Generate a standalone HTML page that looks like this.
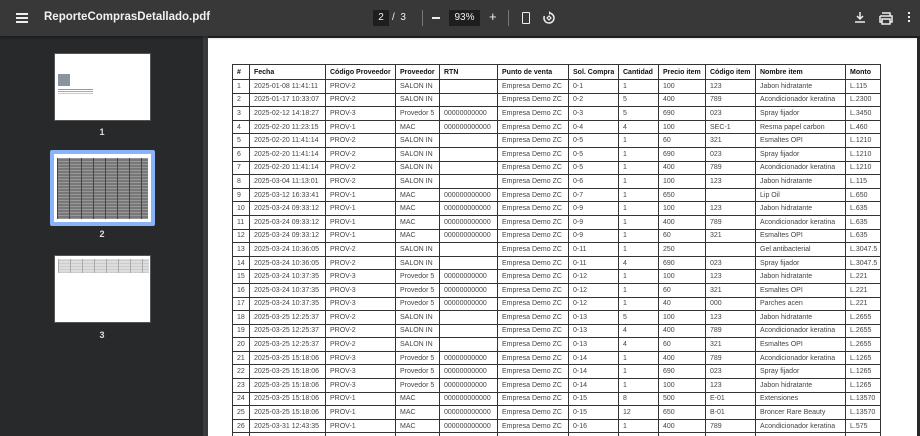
<!DOCTYPE html>
<html><head><meta charset="utf-8"><style>
*{margin:0;padding:0;box-sizing:border-box}
html,body{width:920px;height:436px;overflow:hidden}
body{background:#282828;font-family:"Liberation Sans",sans-serif;position:relative}
#tb{position:absolute;left:0;top:0;width:920px;height:36px;background:#383838;box-shadow:0 1px 3px rgba(0,0,0,.5);color:#f1f1f1;z-index:2}
#side{position:absolute;left:0;top:36px;width:203px;height:400px;background:#28292a}
#div{position:absolute;left:203px;top:36px;width:5px;height:400px;background:#3a3b3c}
#page{position:absolute;left:208px;top:38px;width:709px;height:398px;background:#fff;overflow:hidden}
.th{position:absolute;background:#fff;border:1px solid #555}
.num{position:absolute;color:#ddd;font-size:9px;font-weight:bold;width:20px;text-align:center}
table{position:absolute;left:24px;top:26px;border-collapse:collapse;table-layout:fixed;width:648px;font-size:7px;color:#444}
td,th{border:1px solid #333;height:13.6px;padding:0 0 0 4px;white-space:nowrap;overflow:hidden;text-align:left;line-height:11px}
th{color:#111;font-weight:bold;height:15px}
</style></head><body>
<div id="tb">
 <div style="position:absolute;left:16px;top:13px;width:12px;height:2px;background:#eee;box-shadow:0 4px 0 #eee,0 8px 0 #eee"></div>
 <div style="position:absolute;left:44px;top:11px;font-size:11.5px;font-weight:bold">ReporteComprasDetallado.pdf</div>
 <div style="position:absolute;left:373px;top:10px;width:16px;height:16px;background:#1e1e1e;font-size:10px;text-align:center;line-height:16px">2</div>
 <div style="position:absolute;left:392px;top:12px;font-size:10px">/&nbsp; 3</div>
 <div style="position:absolute;left:422px;top:10px;width:1px;height:16px;background:#777"></div>
 <div style="position:absolute;left:432px;top:17px;width:8px;height:1.5px;background:#eee"></div>
 <div style="position:absolute;left:449px;top:10px;width:31px;height:16px;background:#1e1e1e;font-size:10px;text-align:center;line-height:16px">93%</div>
 <div style="position:absolute;left:489px;top:9px;font-size:13px">+</div>
 <div style="position:absolute;left:508px;top:10px;width:1px;height:16px;background:#777"></div>
 <div style="position:absolute;left:522px;top:12px;width:8px;height:12px;border:1.5px solid #eee;border-radius:1px"></div>
 <svg style="position:absolute;left:541px;top:10px" width="16" height="16" viewBox="0 0 16 16"><path d="M8 3a5 5 0 1 1-4.6 3" fill="none" stroke="#eee" stroke-width="1.5"/><path d="M8 6l-2 2 2 2 2-2z" fill="none" stroke="#eee" stroke-width="1.2"/><path d="M8 1v4l2-2z" fill="#eee"/></svg>
 <svg style="position:absolute;left:853px;top:11px" width="14" height="14" viewBox="0 0 14 14"><path d="M7 1v7M4 5l3 3 3-3M2 11h10" fill="none" stroke="#eee" stroke-width="1.5"/></svg>
 <svg style="position:absolute;left:878px;top:10px" width="16" height="16" viewBox="0 0 16 16"><path d="M4 3h8v3M2 6h12v6h-2M4 12H2V6M4 9h8v5H4z" fill="none" stroke="#eee" stroke-width="1.5"/></svg>
 <div style="position:absolute;left:908px;top:12px;width:2px;height:2px;background:#eee;box-shadow:0 4px 0 #eee,0 8px 0 #eee"></div>
</div>
<div id="side">
 <div class="th" style="left:54px;top:17px;width:97px;height:68px"><div style="position:absolute;left:3px;top:20px;width:12px;height:12px;background:#8a94a3"></div><div style="position:absolute;left:3px;top:35px;width:35px;height:1px;background:#999;box-shadow:0 2px 0 #aaa,0 4px 0 #ccc"></div></div>
 <div class="num" style="left:92px;top:91px">1</div>
 <div style="position:absolute;left:50px;top:114px;width:105px;height:76px;background:#8ab4f8;border-radius:2px"></div>
 <div class="th" style="left:54px;top:118px;width:97px;height:68px;border:none"><div style="position:absolute;left:3px;top:4px;width:91px;height:61px;background:repeating-linear-gradient(90deg,#444 0 1px,transparent 1px 12px),repeating-linear-gradient(0deg,#999 0 1px,#777 1px 3px)"></div></div>
 <div class="num" style="left:92px;top:193px">2</div>
 <div class="th" style="left:54px;top:219px;width:97px;height:68px"><div style="position:absolute;left:3px;top:3px;width:91px;height:14px;background:repeating-linear-gradient(90deg,#aaa 0 1px,transparent 1px 12px),repeating-linear-gradient(0deg,#ccc 0 1px,#ddd 1px 3px)"></div></div>
 <div class="num" style="left:92px;top:294px">3</div>
</div>
<div id="div"></div>
<div id="page">
<table>
<colgroup><col style="width:17px"><col style="width:76px"><col style="width:70px"><col style="width:44px"><col style="width:58px"><col style="width:71px"><col style="width:50px"><col style="width:40px"><col style="width:47px"><col style="width:50px"><col style="width:90px"><col style="width:35px"></colgroup>
<tr><th>#</th><th>Fecha</th><th>Código Proveedor</th><th>Proveedor</th><th>RTN</th><th>Punto de venta</th><th>Sol. Compra</th><th>Cantidad</th><th>Precio item</th><th>Código item</th><th>Nombre item</th><th>Monto</th></tr>
<tr><td>1</td><td>2025-01-08 11:41:11</td><td>PROV-2</td><td>SALON IN</td><td></td><td>Empresa Demo ZC</td><td>0-1</td><td>1</td><td>100</td><td>123</td><td>Jabon hidratante</td><td>L.115</td></tr>
<tr><td>2</td><td>2025-01-17 10:33:07</td><td>PROV-2</td><td>SALON IN</td><td></td><td>Empresa Demo ZC</td><td>0-2</td><td>5</td><td>400</td><td>789</td><td>Acondicionador keratina</td><td>L.2300</td></tr>
<tr><td>3</td><td>2025-02-12 14:18:27</td><td>PROV-3</td><td>Provedor 5</td><td>00000000000</td><td>Empresa Demo ZC</td><td>0-3</td><td>5</td><td>690</td><td>023</td><td>Spray fijador</td><td>L.3450</td></tr>
<tr><td>4</td><td>2025-02-20 11:23:15</td><td>PROV-1</td><td>MAC</td><td>000000000000</td><td>Empresa Demo ZC</td><td>0-4</td><td>4</td><td>100</td><td>SEC-1</td><td>Resma papel carbon</td><td>L.460</td></tr>
<tr><td>5</td><td>2025-02-20 11:41:14</td><td>PROV-2</td><td>SALON IN</td><td></td><td>Empresa Demo ZC</td><td>0-5</td><td>1</td><td>60</td><td>321</td><td>Esmaltes OPI</td><td>L.1210</td></tr>
<tr><td>6</td><td>2025-02-20 11:41:14</td><td>PROV-2</td><td>SALON IN</td><td></td><td>Empresa Demo ZC</td><td>0-5</td><td>1</td><td>690</td><td>023</td><td>Spray fijador</td><td>L.1210</td></tr>
<tr><td>7</td><td>2025-02-20 11:41:14</td><td>PROV-2</td><td>SALON IN</td><td></td><td>Empresa Demo ZC</td><td>0-5</td><td>1</td><td>400</td><td>789</td><td>Acondicionador keratina</td><td>L.1210</td></tr>
<tr><td>8</td><td>2025-03-04 11:13:01</td><td>PROV-2</td><td>SALON IN</td><td></td><td>Empresa Demo ZC</td><td>0-6</td><td>1</td><td>100</td><td>123</td><td>Jabon hidratante</td><td>L.115</td></tr>
<tr><td>9</td><td>2025-03-12 16:33:41</td><td>PROV-1</td><td>MAC</td><td>000000000000</td><td>Empresa Demo ZC</td><td>0-7</td><td>1</td><td>650</td><td></td><td>Lip Oil</td><td>L.650</td></tr>
<tr><td>10</td><td>2025-03-24 09:33:12</td><td>PROV-1</td><td>MAC</td><td>000000000000</td><td>Empresa Demo ZC</td><td>0-9</td><td>1</td><td>100</td><td>123</td><td>Jabon hidratante</td><td>L.635</td></tr>
<tr><td>11</td><td>2025-03-24 09:33:12</td><td>PROV-1</td><td>MAC</td><td>000000000000</td><td>Empresa Demo ZC</td><td>0-9</td><td>1</td><td>400</td><td>789</td><td>Acondicionador keratina</td><td>L.635</td></tr>
<tr><td>12</td><td>2025-03-24 09:33:12</td><td>PROV-1</td><td>MAC</td><td>000000000000</td><td>Empresa Demo ZC</td><td>0-9</td><td>1</td><td>60</td><td>321</td><td>Esmaltes OPI</td><td>L.635</td></tr>
<tr><td>13</td><td>2025-03-24 10:36:05</td><td>PROV-2</td><td>SALON IN</td><td></td><td>Empresa Demo ZC</td><td>0-11</td><td>1</td><td>250</td><td></td><td>Gel antibacterial</td><td>L.3047.5</td></tr>
<tr><td>14</td><td>2025-03-24 10:36:05</td><td>PROV-2</td><td>SALON IN</td><td></td><td>Empresa Demo ZC</td><td>0-11</td><td>4</td><td>690</td><td>023</td><td>Spray fijador</td><td>L.3047.5</td></tr>
<tr><td>15</td><td>2025-03-24 10:37:35</td><td>PROV-3</td><td>Provedor 5</td><td>00000000000</td><td>Empresa Demo ZC</td><td>0-12</td><td>1</td><td>100</td><td>123</td><td>Jabon hidratante</td><td>L.221</td></tr>
<tr><td>16</td><td>2025-03-24 10:37:35</td><td>PROV-3</td><td>Provedor 5</td><td>00000000000</td><td>Empresa Demo ZC</td><td>0-12</td><td>1</td><td>60</td><td>321</td><td>Esmaltes OPI</td><td>L.221</td></tr>
<tr><td>17</td><td>2025-03-24 10:37:35</td><td>PROV-3</td><td>Provedor 5</td><td>00000000000</td><td>Empresa Demo ZC</td><td>0-12</td><td>1</td><td>40</td><td>000</td><td>Parches acen</td><td>L.221</td></tr>
<tr><td>18</td><td>2025-03-25 12:25:37</td><td>PROV-2</td><td>SALON IN</td><td></td><td>Empresa Demo ZC</td><td>0-13</td><td>5</td><td>100</td><td>123</td><td>Jabon hidratante</td><td>L.2655</td></tr>
<tr><td>19</td><td>2025-03-25 12:25:37</td><td>PROV-2</td><td>SALON IN</td><td></td><td>Empresa Demo ZC</td><td>0-13</td><td>4</td><td>400</td><td>789</td><td>Acondicionador keratina</td><td>L.2655</td></tr>
<tr><td>20</td><td>2025-03-25 12:25:37</td><td>PROV-2</td><td>SALON IN</td><td></td><td>Empresa Demo ZC</td><td>0-13</td><td>4</td><td>60</td><td>321</td><td>Esmaltes OPI</td><td>L.2655</td></tr>
<tr><td>21</td><td>2025-03-25 15:18:06</td><td>PROV-3</td><td>Provedor 5</td><td>00000000000</td><td>Empresa Demo ZC</td><td>0-14</td><td>1</td><td>400</td><td>789</td><td>Acondicionador keratina</td><td>L.1265</td></tr>
<tr><td>22</td><td>2025-03-25 15:18:06</td><td>PROV-3</td><td>Provedor 5</td><td>00000000000</td><td>Empresa Demo ZC</td><td>0-14</td><td>1</td><td>690</td><td>023</td><td>Spray fijador</td><td>L.1265</td></tr>
<tr><td>23</td><td>2025-03-25 15:18:06</td><td>PROV-3</td><td>Provedor 5</td><td>00000000000</td><td>Empresa Demo ZC</td><td>0-14</td><td>1</td><td>100</td><td>123</td><td>Jabon hidratante</td><td>L.1265</td></tr>
<tr><td>24</td><td>2025-03-25 15:18:06</td><td>PROV-1</td><td>MAC</td><td>000000000000</td><td>Empresa Demo ZC</td><td>0-15</td><td>8</td><td>500</td><td>E-01</td><td>Extensiones</td><td>L.13570</td></tr>
<tr><td>25</td><td>2025-03-25 15:18:06</td><td>PROV-1</td><td>MAC</td><td>000000000000</td><td>Empresa Demo ZC</td><td>0-15</td><td>12</td><td>650</td><td>B-01</td><td>Broncer Rare Beauty</td><td>L.13570</td></tr>
<tr><td>26</td><td>2025-03-31 12:43:35</td><td>PROV-1</td><td>MAC</td><td>000000000000</td><td>Empresa Demo ZC</td><td>0-16</td><td>1</td><td>400</td><td>789</td><td>Acondicionador keratina</td><td>L.575</td></tr>
<tr><td>27</td><td></td><td></td><td></td><td></td><td></td><td></td><td></td><td></td><td></td><td></td><td></td></tr>
</table>
</div>
</body></html>
